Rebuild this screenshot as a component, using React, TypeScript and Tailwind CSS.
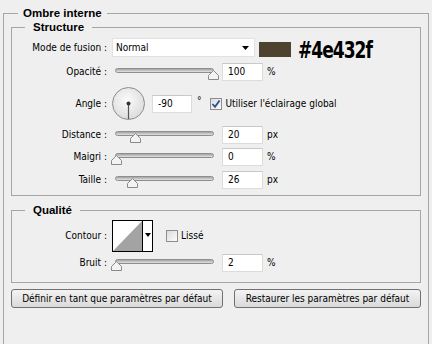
const ui = { fontFamily: '"DejaVu Sans Condensed", "Liberation Sans", sans-serif' };
const legendFont = { fontFamily: '"Liberation Sans", Arial, sans-serif' };

type SliderRow = {
  label: string;
  thumb: number; // thumb centre, px from slider left
  value: string;
  unit: string;
};

const structureSliders: SliderRow[] = [
  { label: "Distance :", thumb: 23, value: "20", unit: "px" },
  { label: "Maigri :", thumb: 4, value: "0", unit: "%" },
  { label: "Taille :", thumb: 20, value: "26", unit: "px" },
];

function Label({ text }: { text: string }) {
  return <div className="w-[95px] shrink-0 text-right">{text}</div>;
}

function Field({ value, w = "w-[41px]" }: { value: string; w?: string }) {
  return (
    <div
      className={`${w} h-[18px] shrink-0 bg-white border border-[#dcdcdc] border-t-[#c8c8c8] pl-[5px] flex items-center`}
    >
      {value}
    </div>
  );
}

function Slider({ thumb }: { thumb: number }) {
  return (
    <div className="relative h-[18px] w-[104px] shrink-0">
      <div className="absolute left-[3px] top-[5px] h-[5px] w-[99px] rounded-full border border-[#8e8e8e] bg-gradient-to-b from-[#a2a2a2] to-[#e4e4e4]" />
      <svg
        className="absolute top-[7px]"
        style={{ left: thumb - 5 }}
        width="11"
        height="10"
        viewBox="0 0 11 10"
      >
        <polygon
          points="0.5,9.5 0.5,5.5 5.5,0.5 10.5,5.5 10.5,9.5"
          fill="#f3f3f3"
          stroke="#8a8a8a"
        />
      </svg>
    </div>
  );
}

function SliderLine({ row, className }: { row: SliderRow; className: string }) {
  return (
    <div className={`flex items-center h-[18px] ${className}`}>
      <Label text={row.label} />
      <div className="ml-[5px]">
        <Slider thumb={row.thumb} />
      </div>
      <div className="ml-[6px]">
        <Field value={row.value} />
      </div>
      <span className="ml-[4px]">{row.unit}</span>
    </div>
  );
}

function CheckBox({ checked }: { checked?: boolean }) {
  return (
    <div className="w-[12px] h-[12px] shrink-0 border border-[#8e8e8e] bg-gradient-to-br from-[#dcdcdc] to-[#fbfbfb] flex items-center justify-center">
      {checked && (
        <svg width="10" height="10" viewBox="0 0 10 10">
          <path d="M1.5 5 L4 7.8 L8.6 1.5" fill="none" stroke="#2a4e8f" strokeWidth="1.8" />
        </svg>
      )}
    </div>
  );
}

export default function App() {
  return (
    <div
      className="w-[432px] h-[344px] overflow-hidden bg-[#efefef] text-[10px] leading-[12px] text-black"
      style={ui}
    >
      <fieldset className="ml-[3px] mt-[7px] w-[426px] h-[360px] border border-[#a6a6a6] pl-[7px]">
        <legend className="ml-[7px] px-[5px] font-bold text-[11.5px]" style={legendFont}>
          Ombre interne
        </legend>

        {/* Structure */}
        <fieldset className="mt-[2px] w-[410px] border border-[#a6a6a6] pb-[6px]">
          <legend className="ml-[13px] px-[8px] font-bold text-[11.5px]" style={legendFont}>
            Structure
          </legend>

          <div className="flex items-center h-[19px] mt-[5px]">
            <Label text="Mode de fusion :" />
            <div className="ml-[5px] w-[143px] h-[19px] bg-white border border-[#e2e2e2] flex items-center pl-[3px] pr-[5px]">
              <span className="flex-1">Normal</span>
              <svg width="7" height="4" viewBox="0 0 7 4">
                <polygon points="0,0 7,0 3.5,4" fill="#000" />
              </svg>
            </div>
            <div className="ml-[4px] mt-[3px] w-[32px] h-[15px] bg-[#4e432f]" />
            <span
              className="ml-[7px] mt-[2px] inline-block origin-left scale-y-125 text-[19px] leading-[16px] font-black tracking-[-1px]"
              style={{ fontFamily: '"DejaVu Sans Condensed", "Liberation Sans", sans-serif' }}
            >
              #4e432f
            </span>
          </div>

          <SliderLine row={{ label: "Opacité :", thumb: 101, value: "100", unit: "%" }} className="mt-[6px]" />

          <div className="flex items-center h-[35px] mt-[5px]">
            <Label text="Angle :" />
            <svg className="ml-[5px] shrink-0" width="34" height="35" viewBox="0 0 34 35">
              <defs>
                <radialGradient id="dial" cx="0.45" cy="0.4" r="0.6">
                  <stop offset="0" stopColor="#fbfbfb" />
                  <stop offset="1" stopColor="#dcdcdc" />
                </radialGradient>
              </defs>
              <circle cx="16.5" cy="17.5" r="16" fill="url(#dial)" stroke="#8c8c8c" />
              <line x1="16.5" y1="17.5" x2="16.5" y2="33" stroke="#555" strokeWidth="1.2" />
              <circle cx="16.5" cy="17.5" r="2" fill="#333" />
            </svg>
            <div className="ml-[6px]">
              <Field value="-90" w="w-[40px]" />
            </div>
            <span className="ml-[5px] -mt-[6px]">°</span>
            <div className="ml-[8px]">
              <CheckBox checked />
            </div>
            <span className="ml-[4px]">Utiliser l'éclairage global</span>
          </div>

          <SliderLine row={structureSliders[0]} className="mt-[5px]" />
          <SliderLine row={structureSliders[1]} className="mt-[4px]" />
          <SliderLine row={structureSliders[2]} className="mt-[5px]" />
        </fieldset>

        {/* Qualité */}
        <fieldset className="mt-[8px] w-[410px] border border-[#a6a6a6] pb-[10px]">
          <legend className="ml-[13px] px-[8px] font-bold text-[11.5px]" style={legendFont}>
            Qualité
          </legend>

          <div className="flex items-center h-[32px] mt-[4px]">
            <Label text="Contour :" />
            <div className="ml-[5px] w-[41px] h-[32px] border border-black bg-white flex">
              <svg width="29" height="30" viewBox="0 0 29 30" className="shrink-0">
                <polygon points="0,30 29,0 29,30" fill="#a3a3a3" />
              </svg>
              <div className="w-[10px] border-l border-black flex justify-center pt-[12px]">
                <svg width="6" height="4" viewBox="0 0 6 4">
                  <polygon points="0,0 6,0 3,4" fill="#000" />
                </svg>
              </div>
            </div>
            <div className="ml-[13px]">
              <CheckBox />
            </div>
            <span className="ml-[3px]">Lissé</span>
          </div>

          <SliderLine row={{ label: "Bruit :", thumb: 4, value: "2", unit: "%" }} className="mt-[2px]" />
        </fieldset>

        <div className="flex mt-[6px]">
          <button className="w-[212px] h-[19px] rounded-[3px] border border-[#707070] bg-gradient-to-b from-[#f3f3f3] to-[#dadada] text-center">
            Définir en tant que paramètres par défaut
          </button>
          <button className="ml-[11px] w-[187px] h-[19px] rounded-[3px] border border-[#707070] bg-gradient-to-b from-[#f3f3f3] to-[#dadada] text-center">
            Restaurer les paramètres par défaut
          </button>
        </div>
      </fieldset>
    </div>
  );
}
